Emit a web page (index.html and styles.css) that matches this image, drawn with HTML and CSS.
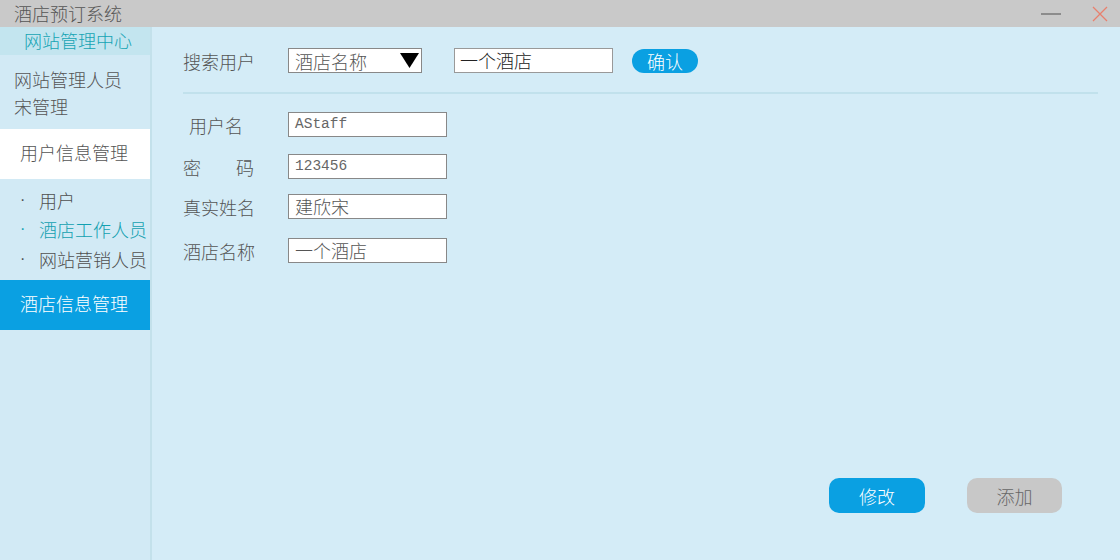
FILE: index.html
```html
<!DOCTYPE html>
<html lang="zh-CN">
<head>
<meta charset="utf-8">
<title>酒店预订系统</title>
<link rel="stylesheet" href="styles.css">
</head>
<body>
<div class="window">
  <div class="titlebar">
    <span class="title">酒店预订系统</span>
    <div class="controls">
      <svg class="ctl-min" width="20" height="10" viewBox="0 0 20 10"><line x1="0" y1="5" x2="20" y2="5" stroke="#777" stroke-width="1.5"/></svg>
      <svg class="ctl-close" width="16" height="16" viewBox="0 0 16 16"><path d="M1 1 L15 15 M15 1 L1 15" stroke="#e8806e" stroke-width="1.3" fill="none"/></svg>
    </div>
  </div>
  <div class="body">
    <aside class="sidebar">
      <div class="side-head">网站管理中心</div>
      <div class="admin">
        <div>网站管理人员</div>
        <div>宋管理</div>
      </div>
      <div class="menu menu-white">用户信息管理</div>
      <ul class="sublist">
        <li><span class="dot">·</span>用户</li>
        <li class="current"><span class="dot">·</span>酒店工作人员</li>
        <li><span class="dot">·</span>网站营销人员</li>
      </ul>
      <div class="menu menu-blue">酒店信息管理</div>
    </aside>
    <main class="main">
      <div class="search">
        <span class="label">搜索用户</span>
        <div class="select">
          <span>酒店名称</span>
          <svg width="19" height="15" viewBox="0 0 19 15"><polygon points="0,0 19,0 9.5,15" fill="#000"/></svg>
        </div>
        <div class="search-input">一个酒店</div>
        <button class="btn-confirm">确认</button>
      </div>
      <div class="divider"></div>
      <div class="form">
        <div class="row"><span class="label label-indent">用户名</span><div class="field mono">AStaff</div></div>
        <div class="row"><span class="label label-spread"><span>密</span><span>码</span></span><div class="field mono">123456</div></div>
        <div class="row"><span class="label">真实姓名</span><div class="field">建欣宋</div></div>
        <div class="row"><span class="label">酒店名称</span><div class="field">一个酒店</div></div>
      </div>
      <div class="actions">
        <button class="btn btn-primary">修改</button>
        <button class="btn btn-gray">添加</button>
      </div>
    </main>
  </div>
</div>
</body>
</html>
```
FILE: styles.css
```css
* { box-sizing: border-box; }
html, body { margin: 0; padding: 0; }
body {
  font-family: "Noto Sans CJK SC", "Noto Sans", sans-serif;
  font-weight: 300;
  font-size: 18px;
  color: #555;
}
.window {
  width: 1120px;
  height: 560px;
  display: flex;
  flex-direction: column;
  overflow: hidden;
}
.titlebar {
  height: 27px;
  background: #c9c9c9;
  display: flex;
  align-items: center;
  justify-content: space-between;
  padding-left: 14px;
  padding-right: 12px;
}
.title { color: #555; line-height: 27px; }
.controls { display: flex; align-items: center; gap: 31px; }
.body { flex: 1; display: flex; }
.sidebar {
  width: 152px;
  background: #d2eaf5;
  border-right: 2px solid #c3e1eb;
  display: flex;
  flex-direction: column;
}
.side-head {
  height: 28px;
  background: #c3e5ef;
  color: #15a4b4;
  text-align: center;
  line-height: 26px;
  padding-left: 6px;
}
.admin {
  padding: 11px 14px 9px;
  line-height: 27px;
  color: #555;
}
.menu {
  height: 50px;
  line-height: 47px;
  padding-left: 20px;
}
.menu-white { background: #fff; color: #555; }
.menu-blue { background: #0aa0e2; color: #fff; }
.sublist {
  list-style: none;
  margin: 0;
  height: 101px;
  padding: 6px 0 0 20px;
  color: #505050;
}
.sublist li {
  display: flex;
  align-items: center;
  height: 29.5px;
  white-space: nowrap;
}
.sublist .dot {
  display: inline-block;
  width: 19px;
  font-family: "Liberation Sans", sans-serif;
  font-weight: 400;
  font-size: 16px;
}
.sublist .current { color: #12a0b0; }
.main {
  flex: 1;
  background: #d4ecf7;
  padding: 21px 22px 47px 31px;
  display: flex;
  flex-direction: column;
}
.search { display: flex; align-items: center; height: 25px; }
.label { width: 105px; color: #555; white-space: nowrap; }
.select {
  width: 134px;
  height: 25px;
  background: #fff;
  border: 1px solid #888;
  display: flex;
  align-items: center;
  justify-content: space-between;
  padding: 0 2px 0 6px;
  color: #555;
}
.search-input {
  width: 159px;
  height: 25px;
  margin-left: 32px;
  background: #fff;
  border: 1px solid #999;
  padding-left: 5px;
  line-height: 22px;
  color: #222;
}
.btn-confirm {
  margin-left: 19px;
  width: 66px;
  height: 24px;
  border: none;
  border-radius: 12px;
  background: #0aa0e2;
  color: #fff;
  font-family: inherit;
  font-weight: 300;
  font-size: 18px;
  line-height: 22px;
  padding: 0;
}
.divider {
  height: 2px;
  background: #c1e1ec;
  margin: 19px 0 18px;
}
.form { display: flex; flex-direction: column; }
.row { display: flex; align-items: center; height: 25px; }
.row:nth-child(2) { margin-top: 17px; }
.row:nth-child(3) { margin-top: 15px; }
.row:nth-child(4) { margin-top: 19px; }
.label-indent { padding-left: 6px; }
.label-spread { display: flex; justify-content: space-between; width: 71px; margin-right: 34px; }
.field {
  width: 159px;
  height: 25px;
  background: #fff;
  border: 1px solid #888;
  padding-left: 6px;
  line-height: 22px;
  color: #555;
}
.field.mono {
  font-family: "Liberation Mono", "DejaVu Sans Mono", monospace;
  font-weight: 400;
  font-size: 14.5px;
  color: #666;
}
.actions {
  margin-top: auto;
  display: flex;
  justify-content: flex-end;
  gap: 42px;
  padding-right: 36px;
}
.btn {
  width: 96px;
  height: 35px;
  border: none;
  border-radius: 10px;
  font-family: inherit;
  font-weight: 300;
  font-size: 18px;
  padding: 0;
}
.btn-primary { background: #0aa0e2; color: #fff; }
.btn-gray { background: #c8c8c8; color: #666; width: 95px; }
```
